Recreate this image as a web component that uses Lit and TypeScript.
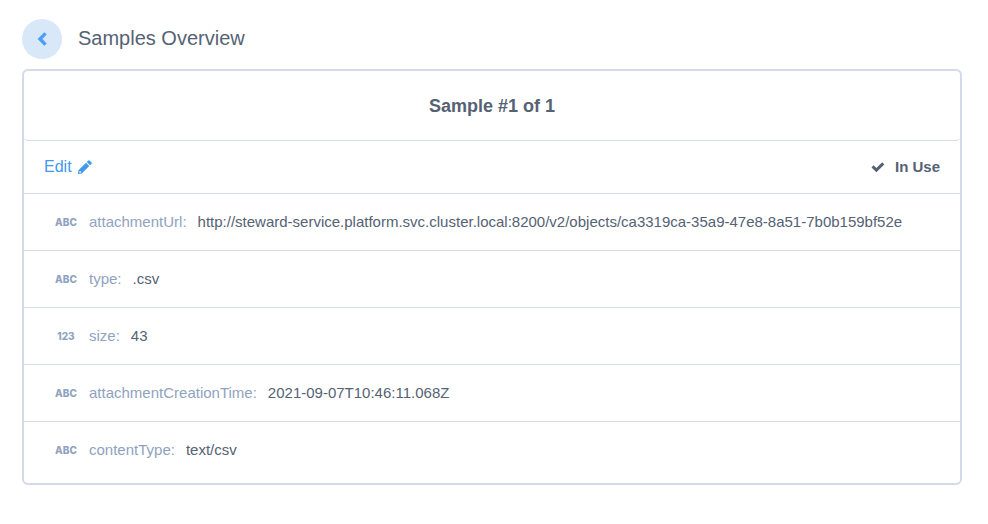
import { LitElement, html, css } from "lit";
import { customElement, property } from "lit/decorators.js";

interface Field {
  kind: "ABC" | "123";
  name: string;
  value: string;
}

const FIELDS: Field[] = [
  {
    kind: "ABC",
    name: "attachmentUrl",
    value:
      "http://steward-service.platform.svc.cluster.local:8200/v2/objects/ca3319ca-35a9-47e8-8a51-7b0b159bf52e",
  },
  { kind: "ABC", name: "type", value: ".csv" },
  { kind: "123", name: "size", value: "43" },
  { kind: "ABC", name: "attachmentCreationTime", value: "2021-09-07T10:46:11.068Z" },
  { kind: "ABC", name: "contentType", value: "text/csv" },
];

@customElement("sample-field")
class SampleField extends LitElement {
  @property({ attribute: false }) field!: Field;

  static styles = css`
    :host {
      display: flex;
      align-items: center;
      height: 56px;
      padding-left: 30px;
      font-size: 15px;
      line-height: 20px;
      white-space: nowrap;
    }
    .kind {
      width: 24px;
      margin-right: 11px;
      text-align: center;
      font: 800 10px/20px Inter, sans-serif;
      color: #8fa3bf;
    }
    .name {
      margin-right: 11px;
      color: #8fa3bf;
    }
    .value {
      color: #556274;
    }
  `;

  render() {
    return html`
      <span class="kind">${this.field.kind}</span>
      <span class="name">${this.field.name}:</span>
      <span class="value">${this.field.value}</span>
    `;
  }
}

@customElement("app-root")
class AppRoot extends LitElement {
  static styles = css`
    :host {
      display: block;
      padding: 19px 26px 39px 22px;
      background: #fff;
      color: #556274;
      font-family: "Liberation Sans", Arial, sans-serif;
    }
    .top {
      display: flex;
      align-items: center;
      gap: 16px;
      margin-bottom: 10px;
    }
    .back {
      display: flex;
      align-items: center;
      justify-content: center;
      width: 40px;
      height: 40px;
      padding: 0;
      border: 0;
      border-radius: 50%;
      background: #d9e8f9;
      color: #4c9ff5;
      cursor: pointer;
    }
    .title {
      margin: 0;
      padding-bottom: 2px;
      font-size: 20px;
      font-weight: 400;
      line-height: 24px;
    }
    .card {
      border: 2px solid #d4daea;
      border-radius: 6px;
      padding-bottom: 5px;
    }
    .heading {
      margin: 0;
      padding: 24px 0 22px;
      border-bottom: 1px solid #d4daea;
      border-radius: 4px;
      font-size: 18px;
      font-weight: 700;
      line-height: 23px;
      text-align: center;
    }
    .tools {
      display: flex;
      align-items: center;
      justify-content: space-between;
      height: 52px;
      padding: 0 20px;
    }
    .edit {
      display: flex;
      align-items: center;
      gap: 6px;
      padding: 0;
      border: 0;
      background: none;
      color: #4299f0;
      font: 16px/20px "Liberation Sans", Arial, sans-serif;
      cursor: pointer;
    }
    .status {
      display: flex;
      align-items: center;
      gap: 10px;
      font-size: 15px;
      font-weight: 700;
      line-height: 20px;
    }
    .row {
      border-top: 1px solid #d4daea;
    }
    svg {
      display: block;
      fill: currentColor;
    }
  `;

  render() {
    return html`
      <header class="top">
        <button class="back" aria-label="Back">
          <svg width="10" height="16" viewBox="0 0 10 16">
            <path d="M7.300 1.200 9.700 3.600 5.400 8 9.700 12.400 7.300 14.800 0.600 8Z" />
          </svg>
        </button>
        <h1 class="title">Samples Overview</h1>
      </header>
      <section class="card">
        <h2 class="heading">Sample #1 of 1</h2>
        <div class="tools">
          <button class="edit">
            Edit
            <svg width="14" height="14" viewBox="0 0 14 14">
              <path
                fill-rule="evenodd"
                d="M8 2.700 11.300 6 3.700 13.600 0.200 14 0 13.800 0.400 10.300ZM8.700 2 10.300 0.400Q10.900-.1 11.500 0.400L13.600 2.500Q14.100 3.100 13.600 3.700L12 5.300ZM1.600 11 1.300 12.700 3.100 12.400 3.100 11.600 2.400 11.600 2.400 11Z"
              />
            </svg>
          </button>
          <div class="status">
            <svg width="14" height="14" viewBox="0 0 14 14">
              <path d="M0.500 7.400 2.600 5.300 5.400 8 11.200 2.300 13.300 4.400 5.400 12.200Z" />
            </svg>
            <span>In Use</span>
          </div>
        </div>
        ${FIELDS.map(
          (field) => html`<div class="row"><sample-field .field=${field}></sample-field></div>`
        )}
      </section>
    `;
  }
}
